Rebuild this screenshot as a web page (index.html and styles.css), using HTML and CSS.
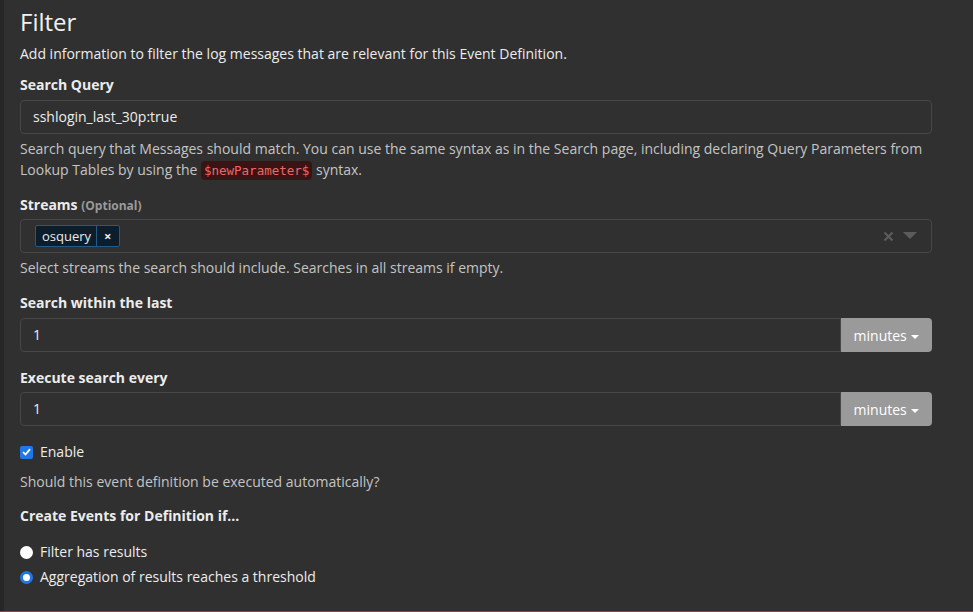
FILE: index.html
```html
<!DOCTYPE html>
<html>
<head>
<meta charset="utf-8">
<link rel="stylesheet" href="styles.css">
</head>
<body>
<div class="page">
  <div class="strip"></div>
  <main class="content">
    <h2 class="title">Filter</h2>
    <p class="lead">Add information to filter the log messages that are relevant for this Event Definition.</p>

    <div class="group">
      <label class="label">Search Query</label>
      <div class="input">sshlogin_last_30p:true</div>
      <p class="help">Search query that Messages should match. You can use the same syntax as in the Search page, including declaring Query Parameters from Lookup Tables by using the <code class="code">$newParameter$</code> syntax.</p>
    </div>

    <div class="group group-streams">
      <label class="label">Streams <span class="opt">(Optional)</span></label>
      <div class="select">
        <span class="tag"><span class="tag-text">osquery</span><span class="tag-x">×</span></span>
        <span class="select-ctrl">
          <svg width="11" height="11" viewBox="0 0 11 11"><path d="M1.5 1.5 L9.5 9.5 M9.5 1.5 L1.5 9.5" stroke="#5c5c5c" stroke-width="2.2"/></svg>
          <svg width="14" height="8" viewBox="0 0 14 8"><path d="M0 0 H14 L7 7 Z" fill="#5c5c5c"/></svg>
        </span>
      </div>
      <p class="help">Select streams the search should include. Searches in all streams if empty.</p>
    </div>

    <div class="group group-within">
      <label class="label label-within">Search within the last</label>
      <div class="input-group">
        <div class="input ig-input">1</div>
        <button class="addon">minutes <span class="caret"></span></button>
      </div>
    </div>

    <div class="group group-every">
      <label class="label label-every">Execute search every</label>
      <div class="input-group">
        <div class="input ig-input">1</div>
        <button class="addon">minutes <span class="caret"></span></button>
      </div>
    </div>

    <div class="check-row">
      <span class="checkbox">
        <svg width="9" height="8" viewBox="0 0 9 8"><path d="M1 4.2 L3.5 6.5 L8 1.2" stroke="#fff" stroke-width="1.8" fill="none"/></svg>
      </span>
      <span>Enable</span>
    </div>
    <p class="help help-enable">Should this event definition be executed automatically?</p>

    <label class="label label-create">Create Events for Definition if...</label>
    <div class="radio-row"><span class="radio"></span><span>Filter has results</span></div>
    <div class="radio-row"><span class="radio radio-on"></span><span>Aggregation of results reaches a threshold</span></div>
  </main>
</div>
</body>
</html>
```

FILE: styles.css
```css
html, body {
  margin: 0;
  padding: 0;
  height: 100%;
}
body {
  background: #303030;
  color: #ececec;
  font-family: "Open Sans", "Liberation Sans", sans-serif;
  font-size: 14px;
  line-height: 20px;
  overflow: hidden;
}
.page {
  display: flex;
  height: 611px;
  border-bottom: 1px solid #c0302a;
}
.strip {
  width: 4px;
  background: #262626;
  flex: none;
}
.content {
  flex: none;
  width: 912px;
  padding-left: 16px;
  padding-top: 5px;
}
.title {
  margin: 0;
  font-size: 24px;
  font-weight: 400;
  line-height: 34px;
  color: #f2f2f2;
}
.lead {
  margin: 5px 0 0;
}
.group {
  margin-top: 11px;
}
.group-streams {
  margin-top: 15px;
}
.group-streams .label {
  margin-bottom: 3px;
}
.group-within {
  margin-top: 15px;
}
.group-every {
  margin-top: 16px;
}
.label {
  display: block;
  font-weight: 700;
  margin-bottom: 5px;
}
.label-within {
  margin-bottom: 5px;
}
.label-every {
  margin-bottom: 4px;
}
.opt {
  color: #9a9a9a;
  font-size: 12px;
}
.input {
  box-sizing: border-box;
  height: 34px;
  border: 1px solid #474747;
  border-radius: 4px;
  background: #303030;
  padding: 6px 12px;
  color: #ececec;
}
.help {
  margin: 4px 0 0;
  color: #c4c4c4;
  line-height: 21px;
}
.code {
  font-family: "DejaVu Sans Mono", "Liberation Mono", monospace;
  font-size: 12.5px;
  line-height: 1;
  background: #3a1414;
  color: #e86a6a;
  padding: 2px 3px;
  border-radius: 4px;
}
.select {
  box-sizing: border-box;
  height: 34px;
  border: 1px solid #474747;
  border-radius: 4px;
  display: flex;
  align-items: center;
  padding: 0 14px 0 14px;
}
.tag {
  display: flex;
  border: 1px solid #245a85;
  background: #0c1e2c;
  border-radius: 2px;
  height: 22px;
  box-sizing: border-box;
  font-size: 13px;
  line-height: 20px;
}
.tag-text {
  padding: 0 5px 0 6px;
}
.tag-x {
  border-left: 1px solid #245a85;
  padding: 0 7px 0 7px;
  font-weight: 700;
}
.select-ctrl {
  margin-left: auto;
  display: flex;
  align-items: center;
  gap: 9px;
}
.input-group {
  display: flex;
}
.ig-input {
  flex: 1;
  border-radius: 4px 0 0 4px;
}
.addon {
  flex: none;
  width: 91px;
  height: 34px;
  border: none;
  border-radius: 0 4px 4px 0;
  background: #9a9a9a;
  color: #fff;
  font-family: inherit;
  font-size: 14px;
  padding: 0;
}
.caret {
  display: inline-block;
  width: 0;
  height: 0;
  border-left: 4px solid transparent;
  border-right: 4px solid transparent;
  border-top: 4px solid #fff;
  vertical-align: middle;
  margin-left: 1px;
}
.check-row, .radio-row {
  display: flex;
  align-items: center;
  gap: 7px;
}
.check-row {
  margin-top: 16px;
}
.checkbox {
  width: 13px;
  height: 13px;
  background: #2277e6;
  border-radius: 2px;
  display: flex;
  align-items: center;
  justify-content: center;
}
.help-enable {
  margin-top: 9px;
}
.label-create {
  margin-top: 14px;
  margin-bottom: 16px;
}
.radio-row {
  height: 20px;
  margin-bottom: 5px;
}
.radio {
  box-sizing: border-box;
  width: 13px;
  height: 13px;
  border-radius: 50%;
  background: #fff;
}
.radio-on {
  border: 3px solid #2277e6;
  background: #fff;
}
```
